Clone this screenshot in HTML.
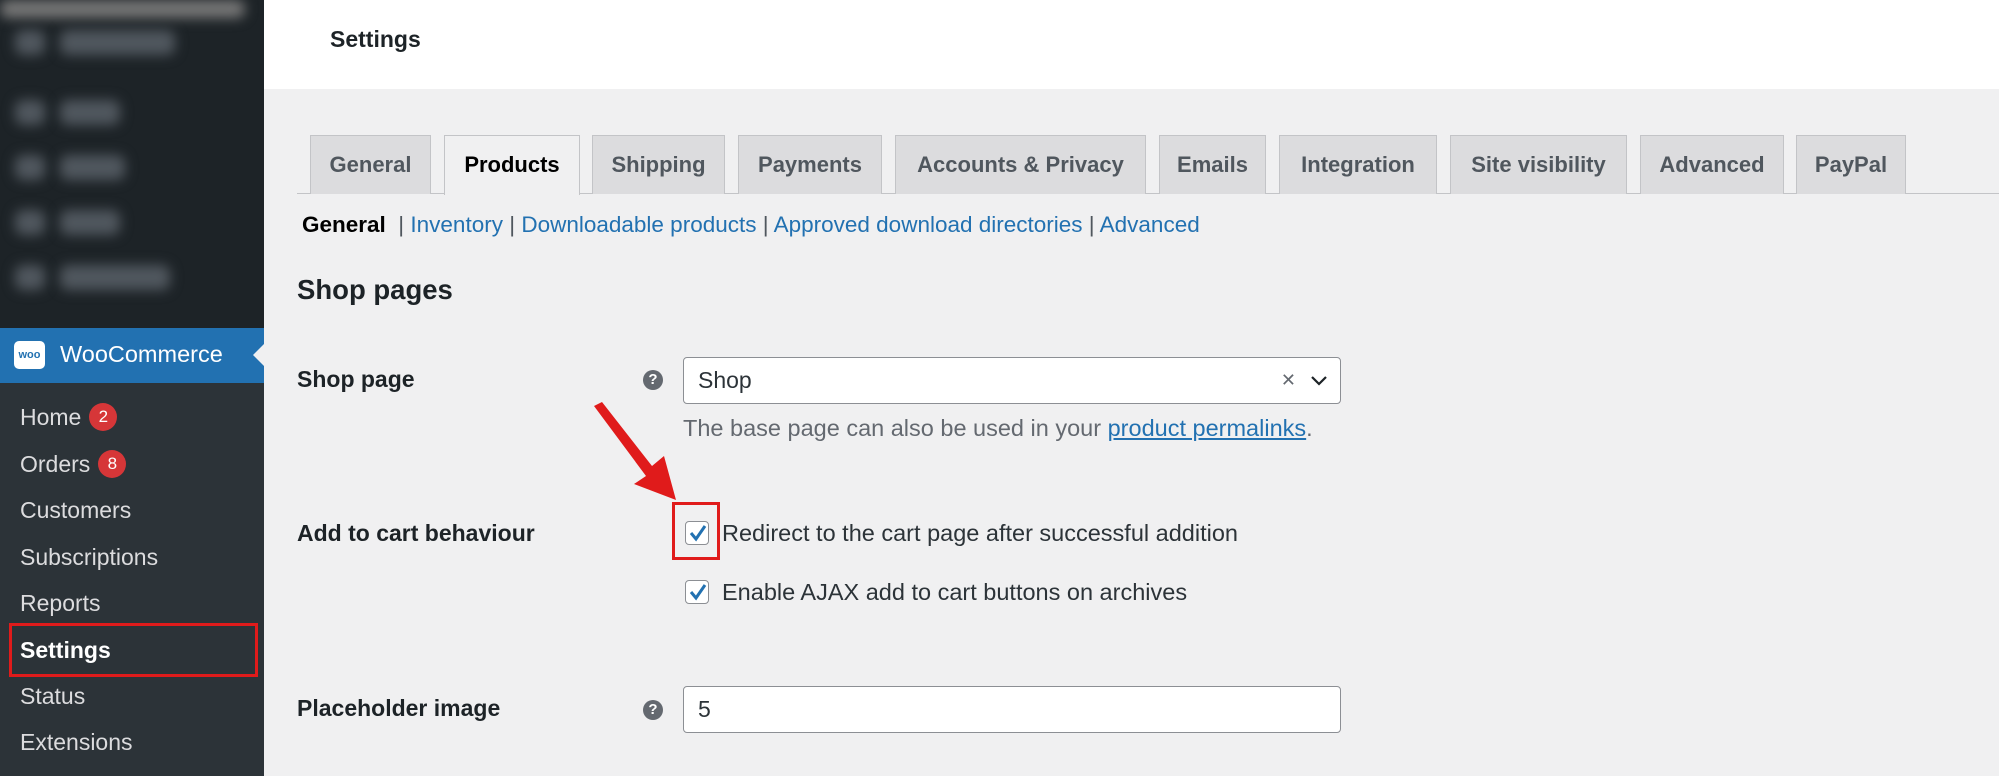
<!DOCTYPE html>
<html><head><meta charset="utf-8"><style>
*{box-sizing:border-box;margin:0;padding:0}
body{width:1999px;height:776px;overflow:hidden;background:#f0f0f1;font-family:"Liberation Sans",sans-serif;position:relative;color:#1d2327}
.abs{position:absolute;white-space:nowrap}
#side{position:absolute;left:0;top:0;width:264px;height:776px;background:#2c3338}
#sidetop{position:absolute;left:0;top:0;width:264px;height:328px;background:#1d2327}
.blur{position:absolute;background:#50575e;border-radius:8px;filter:blur(6px)}
#woo{position:absolute;left:0;top:328px;width:264px;height:55px;background:#2271b1}
.sm{position:absolute;left:20px;color:#dcdcde;font-size:23px;line-height:26px}
.badge{display:inline-block;width:28px;height:28px;border-radius:14px;background:#d63638;color:#fff;font-size:17px;text-align:center;line-height:28px;vertical-align:middle;margin-left:8px;margin-top:-4px}
#hdr{position:absolute;left:264px;top:0;width:1735px;height:89px;background:#fff}
.tab{position:absolute;top:135px;height:59px;background:#dcdcde;border:1px solid #c3c4c7;border-bottom:none;font-size:22px;font-weight:bold;color:#50575e;text-align:center;line-height:58px}
.tab.act{background:#f0f0f1;color:#000;height:60px}
.lnk{color:#2271b1}
.lbl{font-size:23px;font-weight:bold;color:#1d2327}
.help{position:absolute;width:20px;height:20px;border-radius:10px;background:#646970;color:#fff;font-size:15px;font-weight:bold;text-align:center;line-height:20px}
.inp{position:absolute;left:683px;width:658px;height:47px;background:#fff;border:1px solid #8c8f94;border-radius:4px;font-size:23px;padding-left:14px;line-height:45px;color:#2c3338}
.cb{position:absolute;left:685px;width:24px;height:24px;border:1px solid #8c8f94;border-radius:4px;background:#fff}
.txt{font-size:23.5px;color:#2c3338}
</style></head><body>
<div id="side">
<div id="sidetop">
<div class="blur" style="left:0;top:0;width:245px;height:18px;background:#777"></div>
<div class="blur" style="left:15px;top:30px;width:30px;height:25px"></div>
<div class="blur" style="left:60px;top:30px;width:115px;height:25px"></div>
<div class="blur" style="left:15px;top:100px;width:30px;height:25px"></div>
<div class="blur" style="left:60px;top:100px;width:60px;height:25px"></div>
<div class="blur" style="left:15px;top:155px;width:30px;height:25px"></div>
<div class="blur" style="left:60px;top:155px;width:65px;height:25px"></div>
<div class="blur" style="left:15px;top:210px;width:30px;height:25px"></div>
<div class="blur" style="left:60px;top:210px;width:60px;height:25px"></div>
<div class="blur" style="left:15px;top:265px;width:30px;height:25px"></div>
<div class="blur" style="left:60px;top:265px;width:110px;height:25px"></div>
</div>
<div id="woo">
<div style="position:absolute;left:14px;top:13px;width:31px;height:28px;background:#fff;border-radius:5px;color:#2271b1;font-size:11px;font-weight:bold;text-align:center;line-height:28px">woo</div>
<div style="position:absolute;left:60px;top:13px;color:#fff;font-size:23.5px">WooCommerce</div>
<div style="position:absolute;right:0;top:16px;width:0;height:0;border-top:11px solid transparent;border-bottom:11px solid transparent;border-right:11px solid #f0f0f1"></div>
</div>
<div class="sm" style="top:404px">Home<span class="badge">2</span></div>
<div class="sm" style="top:451px">Orders<span class="badge">8</span></div>
<div class="sm" style="top:497px">Customers</div>
<div class="sm" style="top:544px">Subscriptions</div>
<div class="sm" style="top:590px">Reports</div>
<div class="sm" style="top:637px;color:#fff;font-weight:bold">Settings</div>
<div class="sm" style="top:683px">Status</div>
<div class="sm" style="top:729px">Extensions</div>
<div style="position:absolute;left:9px;top:623px;width:249px;height:54px;border:3px solid #e01b1b"></div>
</div>
<div id="hdr"><div class="abs" style="left:66px;top:26px;font-size:23px;font-weight:bold;color:#1d2327">Settings</div></div>

<div style="position:absolute;left:297px;top:193px;width:1702px;height:1px;background:#c3c4c7"></div>
<div class="tab" style="left:310px;width:121px">General</div>
<div class="tab act" style="left:444px;width:136px">Products</div>
<div class="tab" style="left:592px;width:133px">Shipping</div>
<div class="tab" style="left:738px;width:144px">Payments</div>
<div class="tab" style="left:895px;width:251px">Accounts &amp; Privacy</div>
<div class="tab" style="left:1159px;width:107px">Emails</div>
<div class="tab" style="left:1279px;width:158px">Integration</div>
<div class="tab" style="left:1450px;width:177px">Site visibility</div>
<div class="tab" style="left:1640px;width:144px">Advanced</div>
<div class="tab" style="left:1796px;width:110px">PayPal</div>

<div class="abs" style="left:302px;top:212px;font-size:22.5px;color:#50575e"><b style="color:#000">General</b>&nbsp; | <span class="lnk">Inventory</span> | <span class="lnk">Downloadable products</span> | <span class="lnk">Approved download directories</span> | <span class="lnk">Advanced</span></div>

<div class="abs" style="left:297px;top:274px;font-size:27.5px;font-weight:bold">Shop pages</div>

<div class="abs lbl" style="left:297px;top:366px">Shop page</div>
<div class="help" style="left:643px;top:370px">?</div>
<div class="inp" style="top:357px">Shop<span style="position:absolute;right:44px;top:0;color:#646970;font-size:18px">✕</span><svg style="position:absolute;right:12px;top:17px" width="18" height="12" viewBox="0 0 18 12"><path d="M2 2 L9 9 L16 2" fill="none" stroke="#1d2327" stroke-width="2.2"/></svg></div>
<div class="abs txt" style="left:683px;top:415px;color:#646970">The base page can also be used in your <span class="lnk" style="text-decoration:underline">product permalinks</span>.</div>

<div class="abs lbl" style="left:297px;top:520px">Add to cart behaviour</div>
<div class="cb" style="top:521px"></div>
<svg class="abs" style="left:688px;top:522px" width="20" height="22" viewBox="0 0 20 22"><path d="M3 11 L8 17 L17 4" fill="none" stroke="#2271b1" stroke-width="3"/></svg>
<div class="abs txt" style="left:722px;top:520px">Redirect to the cart page after successful addition</div>
<div style="position:absolute;left:672px;top:502px;width:48px;height:58px;border:3px solid #e01b1b"></div>
<div class="cb" style="top:580px"></div>
<svg class="abs" style="left:688px;top:581px" width="20" height="22" viewBox="0 0 20 22"><path d="M3 11 L8 17 L17 4" fill="none" stroke="#2271b1" stroke-width="3"/></svg>
<div class="abs txt" style="left:722px;top:579px">Enable AJAX add to cart buttons on archives</div>

<div class="abs lbl" style="left:297px;top:695px">Placeholder image</div>
<div class="help" style="left:643px;top:700px">?</div>
<div class="inp" style="top:686px">5</div>

<svg class="abs" style="left:590px;top:400px" width="100" height="110" viewBox="0 0 100 110"><path d="M4 6 L12 2 L62 66 L74 56 L86 100 L44 84 L56 76 Z" fill="#e01b1b"/></svg>
</body></html>
